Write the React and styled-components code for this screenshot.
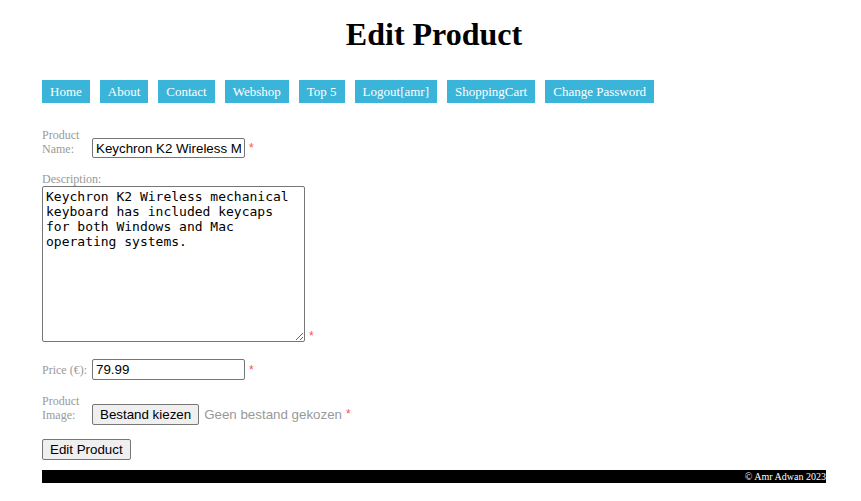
import React from "react";
import styled, { createGlobalStyle } from "styled-components";

const GlobalStyle = createGlobalStyle`
  body {
    margin: 0;
    background: #fff;
    font-family: "Liberation Serif", "Times New Roman", serif;
  }
`;

const Page = styled.div`
  width: 784px;
  margin-left: 42px;
  padding-top: 16px;
`;

const Title = styled.h1`
  margin: 0;
  text-align: center;
  font-size: 32px;
  font-weight: bold;
  line-height: 37px;
  color: #000;
`;

const Nav = styled.nav`
  display: flex;
  gap: 10px;
  margin-top: 27px;
`;

const NavLink = styled.a`
  display: block;
  height: 23px;
  line-height: 24px;
  padding: 0 8px;
  background: #3ab4d9;
  color: #fff;
  font-size: 13px;
  text-decoration: none;
`;

const Form = styled.form`
  display: flex;
  flex-direction: column;
  margin-top: 25px;
`;

const Row = styled.div`
  display: flex;
  align-items: flex-end;
  margin-bottom: ${({ $gap }) => $gap || 0}px;
`;

const Label = styled.label`
  display: block;
  width: ${({ $block }) => ($block ? "auto" : "50px")};
  flex-shrink: 0;
  color: #999;
  font-size: 12px;
  line-height: 14px;
  padding-bottom: ${({ $pb }) => $pb || 0}px;
`;

const TextInput = styled.input`
  box-sizing: border-box;
  width: 153px;
  height: ${({ $h }) => $h || 20}px;
  margin: 0;
  padding: 0 3px;
  border: 1px solid #767676;
  border-radius: 2px;
  font-family: "Liberation Sans", Arial, sans-serif;
  font-size: 13.33px;
  color: #000;
`;

const TextArea = styled.textarea`
  box-sizing: border-box;
  width: 263px;
  height: 156px;
  margin: 0;
  padding: 2px 3px;
  border: 1px solid #767676;
  border-radius: 2px;
  font-family: "DejaVu Sans Mono", "Liberation Mono", monospace;
  font-size: 13px;
  line-height: 15px;
  color: #000;
`;

const Required = styled.span`
  color: #ff4d4d;
  font-family: "Liberation Sans", Arial, sans-serif;
  font-size: 12px;
  line-height: 12px;
  margin-left: 4px;
  padding-bottom: ${({ $pb }) => $pb}px;
`;

const FileWrap = styled.div`
  display: flex;
  align-items: flex-end;
`;

const FileButton = styled.label`
  box-sizing: border-box;
  display: block;
  height: 21px;
  line-height: 19px;
  padding: 0 7px;
  border: 1px solid #767676;
  border-radius: 2px;
  background: #efefef;
  font-family: "Liberation Sans", Arial, sans-serif;
  font-size: 13.33px;
  color: #000;
  input {
    display: none;
  }
`;

const FileName = styled.span`
  margin-left: 5px;
  padding-bottom: 3px;
  font-family: "Liberation Sans", Arial, sans-serif;
  font-size: 13.33px;
  line-height: 15px;
  color: #999;
`;

const Submit = styled.button`
  box-sizing: border-box;
  align-self: flex-start;
  height: 21px;
  padding: 0 7px;
  margin: 0;
  border: 1px solid #767676;
  border-radius: 2px;
  background: #efefef;
  font-family: "Liberation Sans", Arial, sans-serif;
  font-size: 13.33px;
  color: #000;
`;

const Footer = styled.footer`
  margin-top: 10px;
  height: 13px;
  background: #000;
  color: #fff;
  text-align: right;
  font-size: 10px;
  line-height: 13px;
`;

const links = [
  "Home",
  "About",
  "Contact",
  "Webshop",
  "Top 5",
  "Logout[amr]",
  "ShoppingCart",
  "Change Password",
];

export default function App() {
  return (
    <>
      <GlobalStyle />
      <Page>
        <Title>Edit Product</Title>
        <Nav>
          {links.map((l) => (
            <NavLink key={l} href="#">
              {l}
            </NavLink>
          ))}
        </Nav>
        <Form onSubmit={(e) => e.preventDefault()}>
          <Row $gap={14}>
            <Label $pb={2}>Product Name:</Label>
            <TextInput defaultValue="Keychron K2 Wireless Mechanical Keyboard" />
            <Required $pb={4}>*</Required>
          </Row>
          <Label $block>Description:</Label>
          <Row $gap={17}>
            <TextArea defaultValue="Keychron K2 Wireless mechanical keyboard has included keycaps for both Windows and Mac operating systems." />
            <Required $pb={0}>*</Required>
          </Row>
          <Row $gap={14}>
            <Label $pb={3}>Price (€):</Label>
            <TextInput $h={21} defaultValue="79.99" />
            <Required $pb={4}>*</Required>
          </Row>
          <Row $gap={14}>
            <Label $pb={3}>Product Image:</Label>
            <FileWrap>
              <FileButton>
                Bestand kiezen
                <input type="file" />
              </FileButton>
              <FileName>Geen bestand gekozen</FileName>
              <Required $pb={5}>*</Required>
            </FileWrap>
          </Row>
          <Submit type="submit">Edit Product</Submit>
        </Form>
        <Footer>© Amr Adwan 2023</Footer>
      </Page>
    </>
  );
}
